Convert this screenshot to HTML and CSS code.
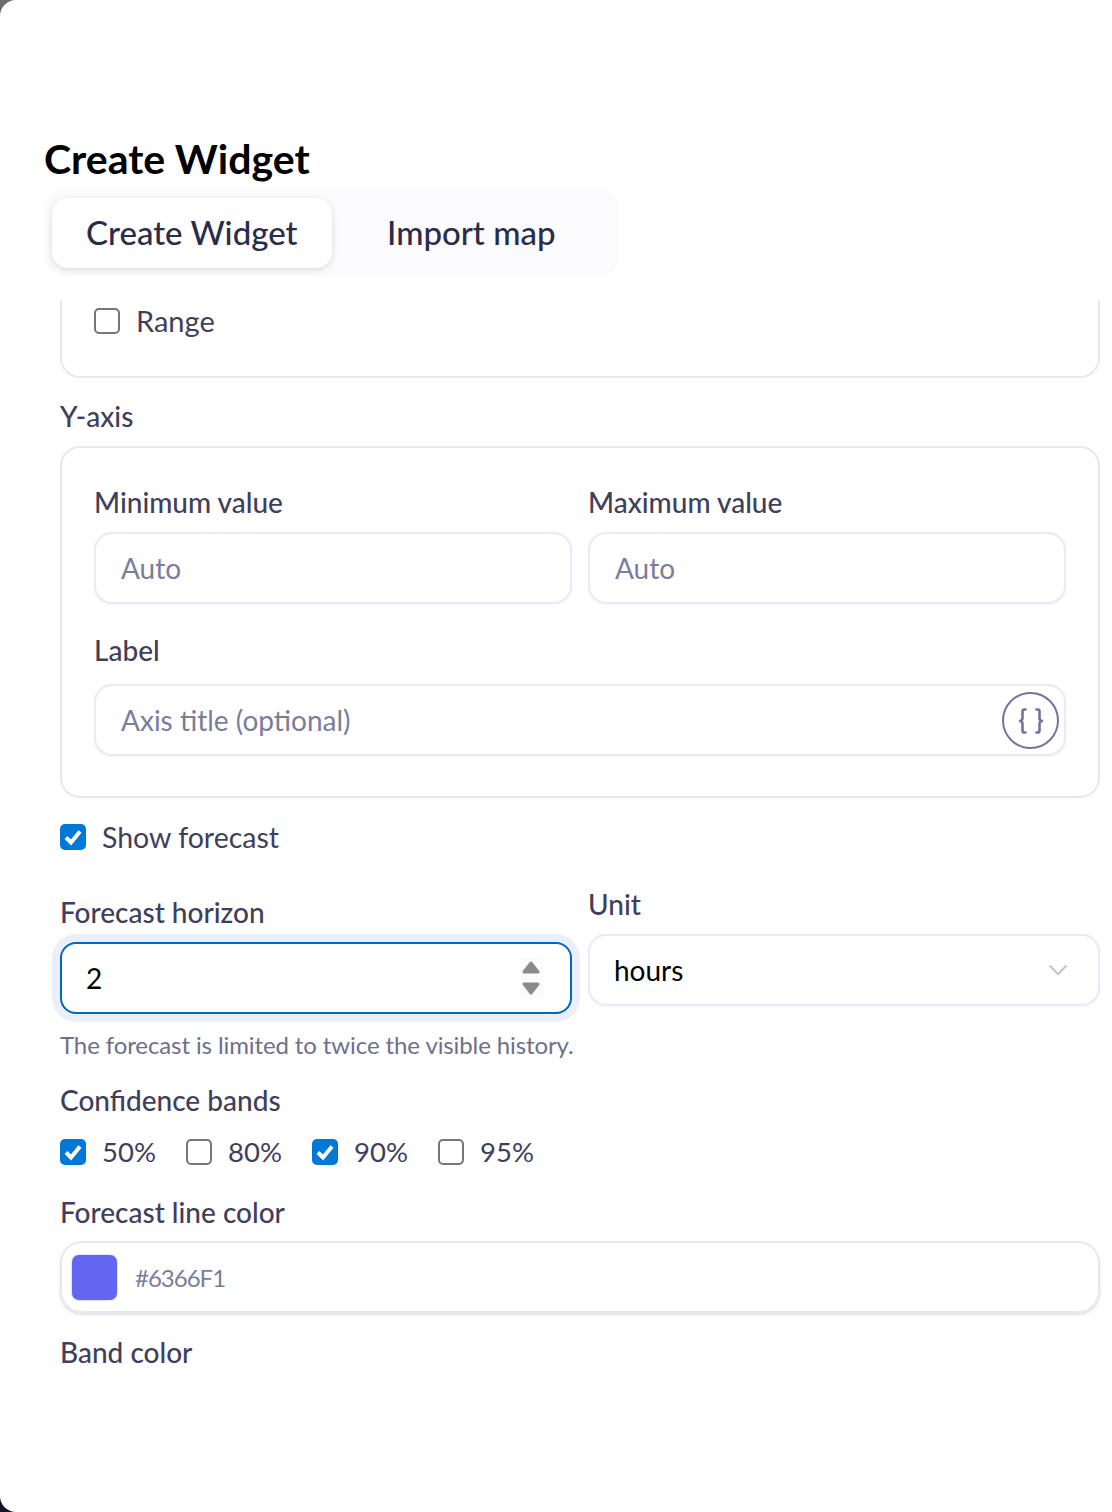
FILE: index.html
```html
<!DOCTYPE html>
<html lang="en">
<head>
  <meta charset="UTF-8" />
  <meta name="viewport" content="width=device-width, initial-scale=1.0"/>
  <title>Create Widget</title>
  <link rel="stylesheet" href="styles.css">
</head>
<body>
  <div class="modal">
    <h1 class="modal-title">Create Widget</h1>

    <div class="tabs">
      <div class="tab active">Create Widget</div>
      <div class="tab">Import map</div>
    </div>

    <div class="scroll">
      <div class="card card-cut">
        <label class="check-row">
          <span class="check"></span>
          <span class="range-text">Range</span>
        </label>
      </div>

      <div class="section-label">Y-axis</div>
      <div class="card card-axis">
        <div class="axis-row">
          <div class="field">
            <label class="field-label" for="minValue">Minimum value</label>
            <input class="text-input" id="minValue" type="text" placeholder="Auto" />
          </div>
          <div class="field">
            <label class="field-label" for="maxValue">Maximum value</label>
            <input class="text-input" id="maxValue" type="text" placeholder="Auto" />
          </div>
        </div>
        <div class="field field-wide">
          <label class="field-label" for="axisLabel">Label</label>
          <div class="input-wrap">
            <input class="text-input" id="axisLabel" type="text" placeholder="Axis title (optional)" />
            <button class="template-btn" type="button" aria-label="Insert template">
              <svg width="30" height="30" viewBox="0 0 30 30" fill="none" stroke="#74749a" stroke-width="2.6" stroke-linecap="round" stroke-linejoin="round">
                <path d="M9.5 3.5H8.2C7 3.5 6.5 4.2 6.5 5.3V12.2C6.5 13.5 5.6 14.6 4 15C5.6 15.4 6.5 16.5 6.5 17.8V24.7C6.5 25.8 7 26.5 8.2 26.5H9.5"/>
                <path d="M20.5 3.5H21.8C23 3.5 23.5 4.2 23.5 5.3V12.2C23.5 13.5 24.4 14.6 26 15C24.4 15.4 23.5 16.5 23.5 17.8V24.7C23.5 25.8 23 26.5 21.8 26.5H20.5"/>
              </svg>
            </button>
          </div>
        </div>
      </div>

      <label class="check-row check-forecast">
        <span class="check checked">
          <svg viewBox="0 0 26 26" fill="none" stroke="#fff" stroke-width="4"><path d="M6 13.5L11 18.5L20 7.5"/></svg>
        </span>
        <span>Show forecast</span>
      </label>

      <div class="forecast-row">
        <div class="field field-horizon">
          <label class="field-label" for="horizon">Forecast horizon</label>
          <div class="input-wrap">
            <input class="text-input input-focused" id="horizon" type="text" value="2" />
            <span class="spinner">
              <svg width="18" height="36" viewBox="0 0 18 36" fill="#8a8a8a" stroke="#8a8a8a" stroke-width="3" stroke-linejoin="round">
                <path d="M9 3L16 12H2Z"/>
                <path d="M2 24H16L9 33Z"/>
              </svg>
            </span>
          </div>
        </div>
        <div class="field field-unit">
          <label class="field-label" for="unit">Unit</label>
          <div class="input-wrap">
            <input class="text-input input-value" id="unit" type="text" value="hours" />
            <svg class="chevron" width="20" height="12" viewBox="0 0 20 12" fill="none" stroke="#c4c4d4" stroke-width="2.2"><path d="M1.5 1.5L10 10L18.5 1.5"/></svg>
          </div>
        </div>
      </div>

      <p class="helper">The forecast is limited to twice the visible history.</p>

      <div class="section-label bands-label">Confidence bands</div>
      <div class="bands">
        <label class="check-row">
          <span class="check checked">
            <svg viewBox="0 0 26 26" fill="none" stroke="#fff" stroke-width="4"><path d="M6 13.5L11 18.5L20 7.5"/></svg>
          </span>
          <span>50%</span>
        </label>
        <label class="check-row">
          <span class="check"></span>
          <span>80%</span>
        </label>
        <label class="check-row">
          <span class="check checked">
            <svg viewBox="0 0 26 26" fill="none" stroke="#fff" stroke-width="4"><path d="M6 13.5L11 18.5L20 7.5"/></svg>
          </span>
          <span>90%</span>
        </label>
        <label class="check-row">
          <span class="check"></span>
          <span>95%</span>
        </label>
      </div>

      <div class="section-label line-color-label">Forecast line color</div>
      <div class="color-input">
        <span class="swatch"></span>
        <span class="color-value">#6366F1</span>
      </div>

      <div class="section-label band-color-label">Band color</div>
    </div>
  </div>
</body>
</html>
```

FILE: styles.css
```css
* {
  box-sizing: border-box;
}

html, body {
  margin: 0;
  padding: 0;
}

body {
  width: 1112px;
  height: 1512px;
  overflow: hidden;
  background: linear-gradient(180deg, #6b6b6b 0%, #2a2a3a 50%, #14142c 100%);
  font-family: "Lato", sans-serif;
  color: #3f3f5c;
}

.modal {
  height: 1512px;
  background: #fff;
  border-radius: 16px 0 0 16px;
  overflow: hidden;
  padding-top: 132px;
}

.modal-title {
  margin: 0 0 0 44px;
  font-size: 41px;
  line-height: 53px;
  font-weight: 700;
  color: #000;
}

.tabs {
  display: flex;
  width: 575px;
  height: 87px;
  margin: 4px 0 0 44px;
  padding: 9px 8px;
  background: #fbfbfd;
  border-radius: 20px;
}

.tab {
  width: 281px;
  height: 70px;
  line-height: 69px;
  text-align: center;
  font-size: 33px;
  font-weight: 500;
  color: #2a2d4a;
  border-radius: 16px;
}

.tab.active {
  background: #fff;
  box-shadow: 0 2px 6px rgba(30, 30, 60, 0.14);
}

.scroll {
  margin-top: 24px;
  padding: 0 12px 0 60px;
}

.card {
  border: 2px solid #e6e8ee;
  border-radius: 20px;
}

.card-cut {
  height: 78px;
  padding: 8px 0 0 32px;
  border-top: 0;
  border-radius: 0 0 20px 20px;
}

.check-row {
  display: flex;
  align-items: center;
  gap: 16px;
  font-size: 28.5px;
  line-height: 26px;
  color: #3f3f5c;
}

.range-text {
  font-size: 29px;
}

.check {
  flex: none;
  width: 26px;
  height: 26px;
  border: 2px solid #767676;
  border-radius: 5px;
  background: #fff;
}

.check.checked {
  border: 0;
  background: #0078d7;
}

.check svg {
  display: block;
}

.section-label,
.field-label {
  display: block;
  font-size: 28px;
  line-height: 36px;
  font-weight: 500;
  color: #3f3f5c;
}

.section-label {
  margin-top: 20px;
}

.card-axis {
  height: 352px;
  margin-top: 12px;
  padding: 36px 32px 0;
}

.axis-row {
  display: grid;
  grid-template-columns: 478px 478px;
  gap: 16px;
}

.field-label {
  margin-bottom: 12px;
}

.field-wide {
  margin-top: 28px;
}

.field-wide .field-label {
  margin-bottom: 16px;
}

.text-input {
  display: block;
  width: 100%;
  height: 72px;
  padding: 0 25px;
  border: 2px solid #e9e9fb;
  border-radius: 18px;
  background: #fff;
  font-family: inherit;
  font-size: 28px;
  color: #000;
  outline: none;
  box-shadow: 0 1px 3px rgba(30, 30, 60, 0.04);
}

.text-input::placeholder {
  color: #7c7c9c;
  opacity: 1;
}

.input-wrap {
  position: relative;
}

.template-btn {
  position: absolute;
  top: 8px;
  right: 7px;
  display: flex;
  align-items: center;
  justify-content: center;
  width: 57px;
  height: 57px;
  padding: 0;
  border: 2px solid #74749a;
  border-radius: 50%;
  background: #fff;
}

.check-forecast {
  margin-top: 26px;
}

.forecast-row {
  display: grid;
  grid-template-columns: 512px 512px;
  gap: 16px;
  margin-top: 36px;
}

.field-horizon {
  padding-top: 8px;
}

.input-focused {
  border-color: #0066c0;
  box-shadow: 0 0 0 8px #ebeffa;
  border-radius: 16px;
}

.field-horizon .text-input,
.field-unit .text-input {
  padding-left: 24px;
}

.spinner {
  position: absolute;
  top: 16px;
  right: 29px;
  display: block;
  width: 24px;
  height: 40px;
  padding: 2px 3px;
  background: #fbfbfb;
}

.spinner svg {
  display: block;
}

.chevron {
  position: absolute;
  top: 30px;
  right: 32px;
}

.helper {
  margin: 13px 0 0;
  font-size: 24px;
  letter-spacing: -0.1px;
  line-height: 36px;
  color: #6f6f8a;
}

.bands-label {
  margin-top: 19px;
}

.bands {
  display: grid;
  grid-template-columns: repeat(4, 126px);
  margin-top: 21px;
}

.bands .check-row {
  font-size: 27.5px;
}

.line-color-label {
  margin-top: 29px;
}

.color-input {
  display: flex;
  align-items: center;
  gap: 18px;
  height: 72px;
  margin-top: 11px;
  padding-left: 10px;
  border: 2px solid #e6e8ee;
  border-radius: 22px;
  box-shadow: 0 2px 3px rgba(30, 30, 60, 0.14);
}

.swatch {
  width: 45px;
  height: 45px;
  background: #6366f1;
  border-radius: 7px;
  box-shadow: 0 0 0 1px #e4e4fb;
}

.color-value {
  font-size: 24px;
  letter-spacing: -1px;
  color: #7c7c9c;
}

.band-color-label {
  margin-top: 21px;
}
```
